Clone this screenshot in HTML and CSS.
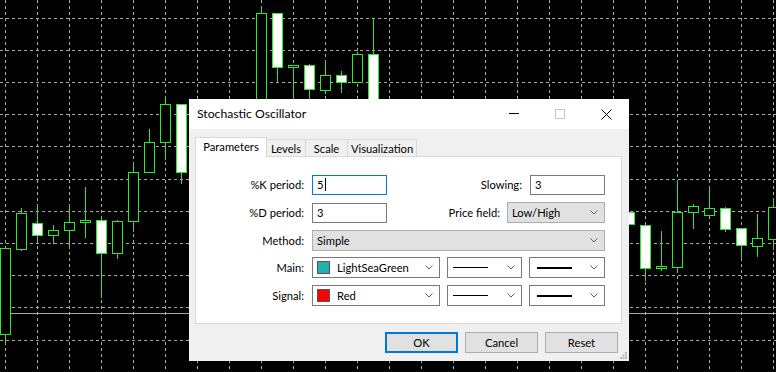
FILE: index.html
```html
<!DOCTYPE html>
<html>
<head>
<meta charset="utf-8">
<link rel="stylesheet" href="styles.css">
</head>
<body>
<div class="screen">
  <svg class="chart" width="776" height="372" viewBox="0 0 776 372">
    <g class="hgrid">
      <line x1="0" y1="18.5" x2="776" y2="18.5"/>
      <line x1="0" y1="50.5" x2="776" y2="50.5"/>
      <line x1="0" y1="82.5" x2="776" y2="82.5"/>
      <line x1="0" y1="114.5" x2="776" y2="114.5"/>
      <line x1="0" y1="146.5" x2="776" y2="146.5"/>
      <line x1="0" y1="179.5" x2="776" y2="179.5"/>
      <line x1="0" y1="211.5" x2="776" y2="211.5"/>
      <line x1="0" y1="243.5" x2="776" y2="243.5"/>
      <line x1="0" y1="275.5" x2="776" y2="275.5"/>
      <line x1="0" y1="307.5" x2="776" y2="307.5"/>
      <line x1="0" y1="340.5" x2="776" y2="340.5"/>
    </g>
    <g class="vgrid">
      <line x1="5.5" y1="0" x2="5.5" y2="372"/>
      <line x1="37.5" y1="0" x2="37.5" y2="372"/>
      <line x1="69.5" y1="0" x2="69.5" y2="372"/>
      <line x1="101.5" y1="0" x2="101.5" y2="372"/>
      <line x1="133.5" y1="0" x2="133.5" y2="372"/>
      <line x1="165.5" y1="0" x2="165.5" y2="372"/>
      <line x1="197.5" y1="0" x2="197.5" y2="372"/>
      <line x1="229.5" y1="0" x2="229.5" y2="372"/>
      <line x1="261.5" y1="0" x2="261.5" y2="372"/>
      <line x1="293.5" y1="0" x2="293.5" y2="372"/>
      <line x1="325.5" y1="0" x2="325.5" y2="372"/>
      <line x1="357.5" y1="0" x2="357.5" y2="372"/>
      <line x1="389.5" y1="0" x2="389.5" y2="372"/>
      <line x1="421.5" y1="0" x2="421.5" y2="372"/>
      <line x1="453.5" y1="0" x2="453.5" y2="372"/>
      <line x1="485.5" y1="0" x2="485.5" y2="372"/>
      <line x1="517.5" y1="0" x2="517.5" y2="372"/>
      <line x1="549.5" y1="0" x2="549.5" y2="372"/>
      <line x1="581.5" y1="0" x2="581.5" y2="372"/>
      <line x1="613.5" y1="0" x2="613.5" y2="372"/>
      <line x1="645.5" y1="0" x2="645.5" y2="372"/>
      <line x1="677.5" y1="0" x2="677.5" y2="372"/>
      <line x1="709.5" y1="0" x2="709.5" y2="372"/>
      <line x1="741.5" y1="0" x2="741.5" y2="372"/>
      <line x1="773.5" y1="0" x2="773.5" y2="372"/>
    </g>
    <line class="bidline" x1="0" y1="313.5" x2="776" y2="313.5"/>
    <g class="candles">
      <line class="wick" x1="5.5" y1="248" x2="5.5" y2="344"/><rect class="up" x="0.5" y="248.5" width="10" height="86"/>
      <line class="wick" x1="21.5" y1="208" x2="21.5" y2="251"/><rect class="up" x="16.5" y="213.5" width="10" height="36"/>
      <line class="wick" x1="37.5" y1="204" x2="37.5" y2="240"/><rect class="down" x="32.5" y="223.5" width="10" height="12"/>
      <line class="wick" x1="53.5" y1="225" x2="53.5" y2="244"/><rect class="up" x="48.5" y="230.5" width="10" height="5"/>
      <line class="wick" x1="69.5" y1="204" x2="69.5" y2="249"/><rect class="up" x="64.5" y="222.5" width="10" height="8"/>
      <line class="wick" x1="85.5" y1="187" x2="85.5" y2="238"/><rect class="up" x="80.5" y="220.5" width="10" height="2"/>
      <line class="wick" x1="101.5" y1="217" x2="101.5" y2="298"/><rect class="down" x="96.5" y="220.5" width="10" height="33"/>
      <line class="wick" x1="117.5" y1="220" x2="117.5" y2="259"/><rect class="up" x="112.5" y="221.5" width="10" height="32"/>
      <line class="wick" x1="133.5" y1="163" x2="133.5" y2="232"/><rect class="up" x="128.5" y="172.5" width="10" height="49"/>
      <line class="wick" x1="149.5" y1="129" x2="149.5" y2="173"/><rect class="up" x="144.5" y="142.5" width="10" height="30"/>
      <line class="wick" x1="165.5" y1="97" x2="165.5" y2="160"/><rect class="up" x="160.5" y="104.5" width="10" height="38"/>
      <line class="wick" x1="181.5" y1="104" x2="181.5" y2="184"/><rect class="down" x="176.5" y="104.5" width="10" height="68"/>
      <line class="wick" x1="261.5" y1="6" x2="261.5" y2="200"/><rect class="up" x="256.5" y="13.5" width="10" height="187"/>
      <line class="wick" x1="277.5" y1="13" x2="277.5" y2="83"/><rect class="down" x="272.5" y="13.5" width="10" height="54"/>
      <line class="wick" x1="293.5" y1="65" x2="293.5" y2="200"/><rect class="up" x="288.5" y="65.5" width="10" height="2"/>
      <line class="wick" x1="309.5" y1="64" x2="309.5" y2="200"/><rect class="down" x="304.5" y="65.5" width="10" height="24"/>
      <line class="wick" x1="325.5" y1="60" x2="325.5" y2="94"/><rect class="up" x="320.5" y="75.5" width="10" height="15"/>
      <line class="wick" x1="341.5" y1="71" x2="341.5" y2="93"/><rect class="down" x="336.5" y="75.5" width="10" height="7"/>
      <line class="wick" x1="357.5" y1="52" x2="357.5" y2="83"/><rect class="up" x="352.5" y="54.5" width="10" height="28"/>
      <line class="wick" x1="373.5" y1="18" x2="373.5" y2="200"/><rect class="down" x="368.5" y="54.5" width="10" height="150"/>
      <rect class="down" x="624.5" y="212.5" width="10" height="12"/>
      <line class="wick" x1="645.5" y1="225" x2="645.5" y2="281"/><rect class="down" x="640.5" y="225.5" width="10" height="43"/>
      <line class="wick" x1="661.5" y1="231" x2="661.5" y2="271"/><rect class="up" x="656.5" y="266.5" width="10" height="2"/>
      <line class="wick" x1="677.5" y1="180" x2="677.5" y2="273"/><rect class="up" x="672.5" y="212.5" width="10" height="55"/>
      <line class="wick" x1="693.5" y1="204" x2="693.5" y2="229"/><rect class="up" x="688.5" y="206.5" width="10" height="6"/>
      <line class="wick" x1="709.5" y1="186" x2="709.5" y2="216"/><rect class="up" x="704.5" y="208.5" width="10" height="7"/>
      <line class="wick" x1="725.5" y1="207" x2="725.5" y2="232"/><rect class="down" x="720.5" y="208.5" width="10" height="21"/>
      <line class="wick" x1="741.5" y1="228" x2="741.5" y2="258"/><rect class="down" x="736.5" y="228.5" width="10" height="17"/>
      <line class="wick" x1="757.5" y1="214" x2="757.5" y2="257"/><rect class="up" x="752.5" y="238.5" width="10" height="8"/>
      <line class="wick" x1="773.5" y1="198" x2="773.5" y2="250"/><rect class="up" x="768.5" y="207.5" width="10" height="32"/>
    </g>
  </svg>

  <div class="dialog">
    <div class="titlebar">
      <span class="title">Stochastic Oscillator</span>
      <div class="caption">
        <span class="cbtn"><svg width="10" height="10" viewBox="0 0 10 10"><line class="cap-line" x1="0" y1="4.5" x2="10" y2="4.5"/></svg></span>
        <span class="cbtn"><svg width="10" height="10" viewBox="0 0 10 10"><rect class="cap-max" x="0.5" y="0.5" width="9" height="9"/></svg></span>
        <span class="cbtn"><svg width="11" height="11" viewBox="0 0 11 11"><path class="cap-line" d="M0.5 0.5 L10.5 10.5 M10.5 0.5 L0.5 10.5"/></svg></span>
      </div>
    </div>
    <div class="dlg-body">
      <div class="tabs">
        <div class="tab tab-active tab-params">Parameters</div>
        <div class="tab tab-levels">Levels</div>
        <div class="tab tab-scale">Scale</div>
        <div class="tab tab-vis">Visualization</div>
      </div>
      <div class="panel">
        <div class="row">
          <label class="lbl">%K period:</label>
          <div class="fields split">
            <div class="edit focused"><span class="val">5</span><span class="caret"></span></div>
            <div class="group"><label class="lbl2">Slowing:</label><div class="edit"><span class="val">3</span></div></div>
          </div>
        </div>
        <div class="row">
          <label class="lbl">%D period:</label>
          <div class="fields split">
            <div class="edit"><span class="val">3</span></div>
            <div class="group"><label class="lbl2 lbl-price">Price field:</label>
              <div class="combo gray price"><span class="val">Low/High</span><svg class="chev" width="8" height="5" viewBox="0 0 8 5"><polyline points="0.5,0.5 4,4 7.5,0.5"/></svg></div>
            </div>
          </div>
        </div>
        <div class="row">
          <label class="lbl">Method:</label>
          <div class="fields">
            <div class="combo gray method"><span class="val">Simple</span><svg class="chev" width="8" height="5" viewBox="0 0 8 5"><polyline points="0.5,0.5 4,4 7.5,0.5"/></svg></div>
          </div>
        </div>
        <div class="row">
          <label class="lbl">Main:</label>
          <div class="fields trio">
            <div class="combo color"><span class="swatch swatch-teal"></span><span class="val">LightSeaGreen</span><svg class="chev" width="8" height="5" viewBox="0 0 8 5"><polyline points="0.5,0.5 4,4 7.5,0.5"/></svg></div>
            <div class="combo style"><span class="line thin"></span><svg class="chev" width="8" height="5" viewBox="0 0 8 5"><polyline points="0.5,0.5 4,4 7.5,0.5"/></svg></div>
            <div class="combo width"><span class="line thick"></span><svg class="chev" width="8" height="5" viewBox="0 0 8 5"><polyline points="0.5,0.5 4,4 7.5,0.5"/></svg></div>
          </div>
        </div>
        <div class="row">
          <label class="lbl">Signal:</label>
          <div class="fields trio">
            <div class="combo color"><span class="swatch swatch-red"></span><span class="val">Red</span><svg class="chev" width="8" height="5" viewBox="0 0 8 5"><polyline points="0.5,0.5 4,4 7.5,0.5"/></svg></div>
            <div class="combo style"><span class="line thin"></span><svg class="chev" width="8" height="5" viewBox="0 0 8 5"><polyline points="0.5,0.5 4,4 7.5,0.5"/></svg></div>
            <div class="combo width"><span class="line thick"></span><svg class="chev" width="8" height="5" viewBox="0 0 8 5"><polyline points="0.5,0.5 4,4 7.5,0.5"/></svg></div>
          </div>
        </div>
      </div>
      <div class="buttons">
        <button class="btn btn-default">OK</button>
        <button class="btn">Cancel</button>
        <button class="btn">Reset</button>
      </div>
    </div>
    <svg class="grip" width="7" height="7" viewBox="0 0 7 7">
      <rect x="5" y="0" width="2" height="2"/>
      <rect x="2.5" y="2.5" width="2" height="2"/><rect x="5" y="2.5" width="2" height="2"/>
      <rect x="0" y="5" width="2" height="2"/><rect x="2.5" y="5" width="2" height="2"/><rect x="5" y="5" width="2" height="2"/>
    </svg>
  </div>
</div>
</body>
</html>
```

FILE: styles.css
```css
html, body {
  margin: 0;
  padding: 0;
  background: #000;
}
.screen {
  position: relative;
  width: 776px;
  height: 372px;
  overflow: hidden;
  background: #000;
  font-family: Lato, "Noto Sans", sans-serif;
}
.chart {
  position: absolute;
  left: 0;
  top: 0;
  display: block;
}
.hgrid line, .vgrid line {
  stroke: #a8a8a8;
  stroke-width: 1;
  stroke-dasharray: 3 3;
}
.bidline {
  stroke: #a4aab0;
  stroke-width: 1;
}
.wick {
  stroke: #2ee62e;
  stroke-width: 1;
}
.candles rect {
  stroke: #2ee62e;
  stroke-width: 1;
}
.candles .up { fill: #000; }
.candles .down { fill: #fff; }

/* dialog window */
.dialog {
  position: absolute;
  left: 189px;
  top: 99px;
  width: 440px;
  height: 262px;
  background: #f0f0f0;
  display: flex;
  flex-direction: column;
  color: #000;
  font-size: 11.2px;
}
.titlebar {
  height: 30px;
  background: #fff;
  display: flex;
  align-items: center;
  justify-content: space-between;
  flex: none;
}
.title {
  padding-left: 8px;
  font-size: 12.2px;
  margin-top: -1px;
}
.caption {
  display: flex;
  height: 30px;
}
.cbtn {
  width: 46px;
  height: 30px;
  display: flex;
  align-items: center;
  justify-content: center;
}
.cbtn svg { display: block; }
.cap-line {
  stroke: #000;
  stroke-width: 1;
  fill: none;
}
.cap-max {
  stroke: #c4c4c4;
  stroke-width: 1;
  fill: none;
}
.dlg-body {
  padding: 8px 7px 0 6px;
  display: flex;
  flex-direction: column;
}
.tabs {
  display: flex;
  align-items: flex-end;
  height: 19px;
  position: relative;
  z-index: 1;
}
.tab {
  box-sizing: border-box;
  height: 17px;
  border: 1px solid #d9d9d9;
  border-bottom: none;
  margin-left: -1px;
  display: flex;
  align-items: center;
  justify-content: center;
  background: #f0f0f0;
  padding-top: 1px;
}
.tab-active {
  height: 20px;
  margin-bottom: -1px;
  margin-left: 0;
  background: #fff;
  position: relative;
  z-index: 2;
  padding-top: 0;
  padding-bottom: 2px;
}
.tab-params { width: 72px; }
.tab-levels { width: 40px; }
.tab-scale { width: 43px; }
.tab-vis { width: 70px; }

.panel {
  box-sizing: border-box;
  width: 427px;
  height: 168px;
  background: #fff;
  border: 1px solid #d9d9d9;
  padding-top: 17px;
  display: flex;
  flex-direction: column;
}
.row {
  display: flex;
  align-items: center;
  height: 21px;
  margin-bottom: 7px;
}
.row:nth-child(3) { margin-bottom: 6px; }
.lbl {
  width: 108px;
  text-align: right;
  margin-right: 8px;
  flex: none;
}
.fields {
  width: 293px;
  display: flex;
  align-items: center;
}
.split { justify-content: space-between; }
.trio { justify-content: space-between; }
.group {
  display: flex;
  align-items: center;
}
.lbl2 { margin-right: 8px; }
.lbl-price { margin-right: 7px; }
.edit {
  box-sizing: border-box;
  width: 75px;
  height: 20px;
  border: 1px solid #7a7a7a;
  background: #fff;
  display: flex;
  align-items: center;
  padding-left: 4px;
}
.edit.focused { border-color: #0078d7; }
.caret {
  width: 1px;
  height: 13px;
  background: #000;
  margin-left: 1px;
}
.combo {
  box-sizing: border-box;
  height: 21px;
  border: 1px solid #7a7a7a;
  background: #fff;
  display: flex;
  align-items: center;
  position: relative;
}
.combo.gray {
  background: #e1e1e1;
  border-color: #adadad;
  padding-left: 4px;
}
.combo .val { flex: 1; }
.price { width: 98px; }
.method { width: 293px; }
.color { width: 128px; padding-left: 4px; }
.style { width: 75px; padding-left: 5px; }
.width { width: 76px; padding-left: 7px; }
.swatch {
  box-sizing: border-box;
  width: 13px;
  height: 13px;
  border: 1px solid #555;
  margin-right: 7px;
  flex: none;
}
.swatch-teal { background: #20b2aa; }
.swatch-red { background: #ff0000; }
.chev {
  display: block;
  margin-right: 6px;
  flex: none;
}
.chev polyline {
  fill: none;
  stroke: #606060;
  stroke-width: 1;
}
.line {
  flex: 1;
  background: #000;
  margin-right: 19px;
}
.line.thin { height: 1px; }
.line.thick { height: 2px; margin-right: 18px; }

.buttons {
  display: flex;
  justify-content: flex-end;
  gap: 7px;
  margin-top: 8px;
  margin-right: 4px;
}
.btn {
  box-sizing: border-box;
  width: 73px;
  height: 21px;
  border: 1px solid #adadad;
  background: #e1e1e1;
  font-family: Lato, "Noto Sans", sans-serif;
  font-size: 11.2px;
  color: #000;
  padding: 0;
  margin: 0;
}
.btn-default {
  border: 2px solid #0078d7;
}
.grip {
  position: absolute;
  right: 2px;
  bottom: 2px;
}
.grip rect { fill: #bcbcbc; }
```
